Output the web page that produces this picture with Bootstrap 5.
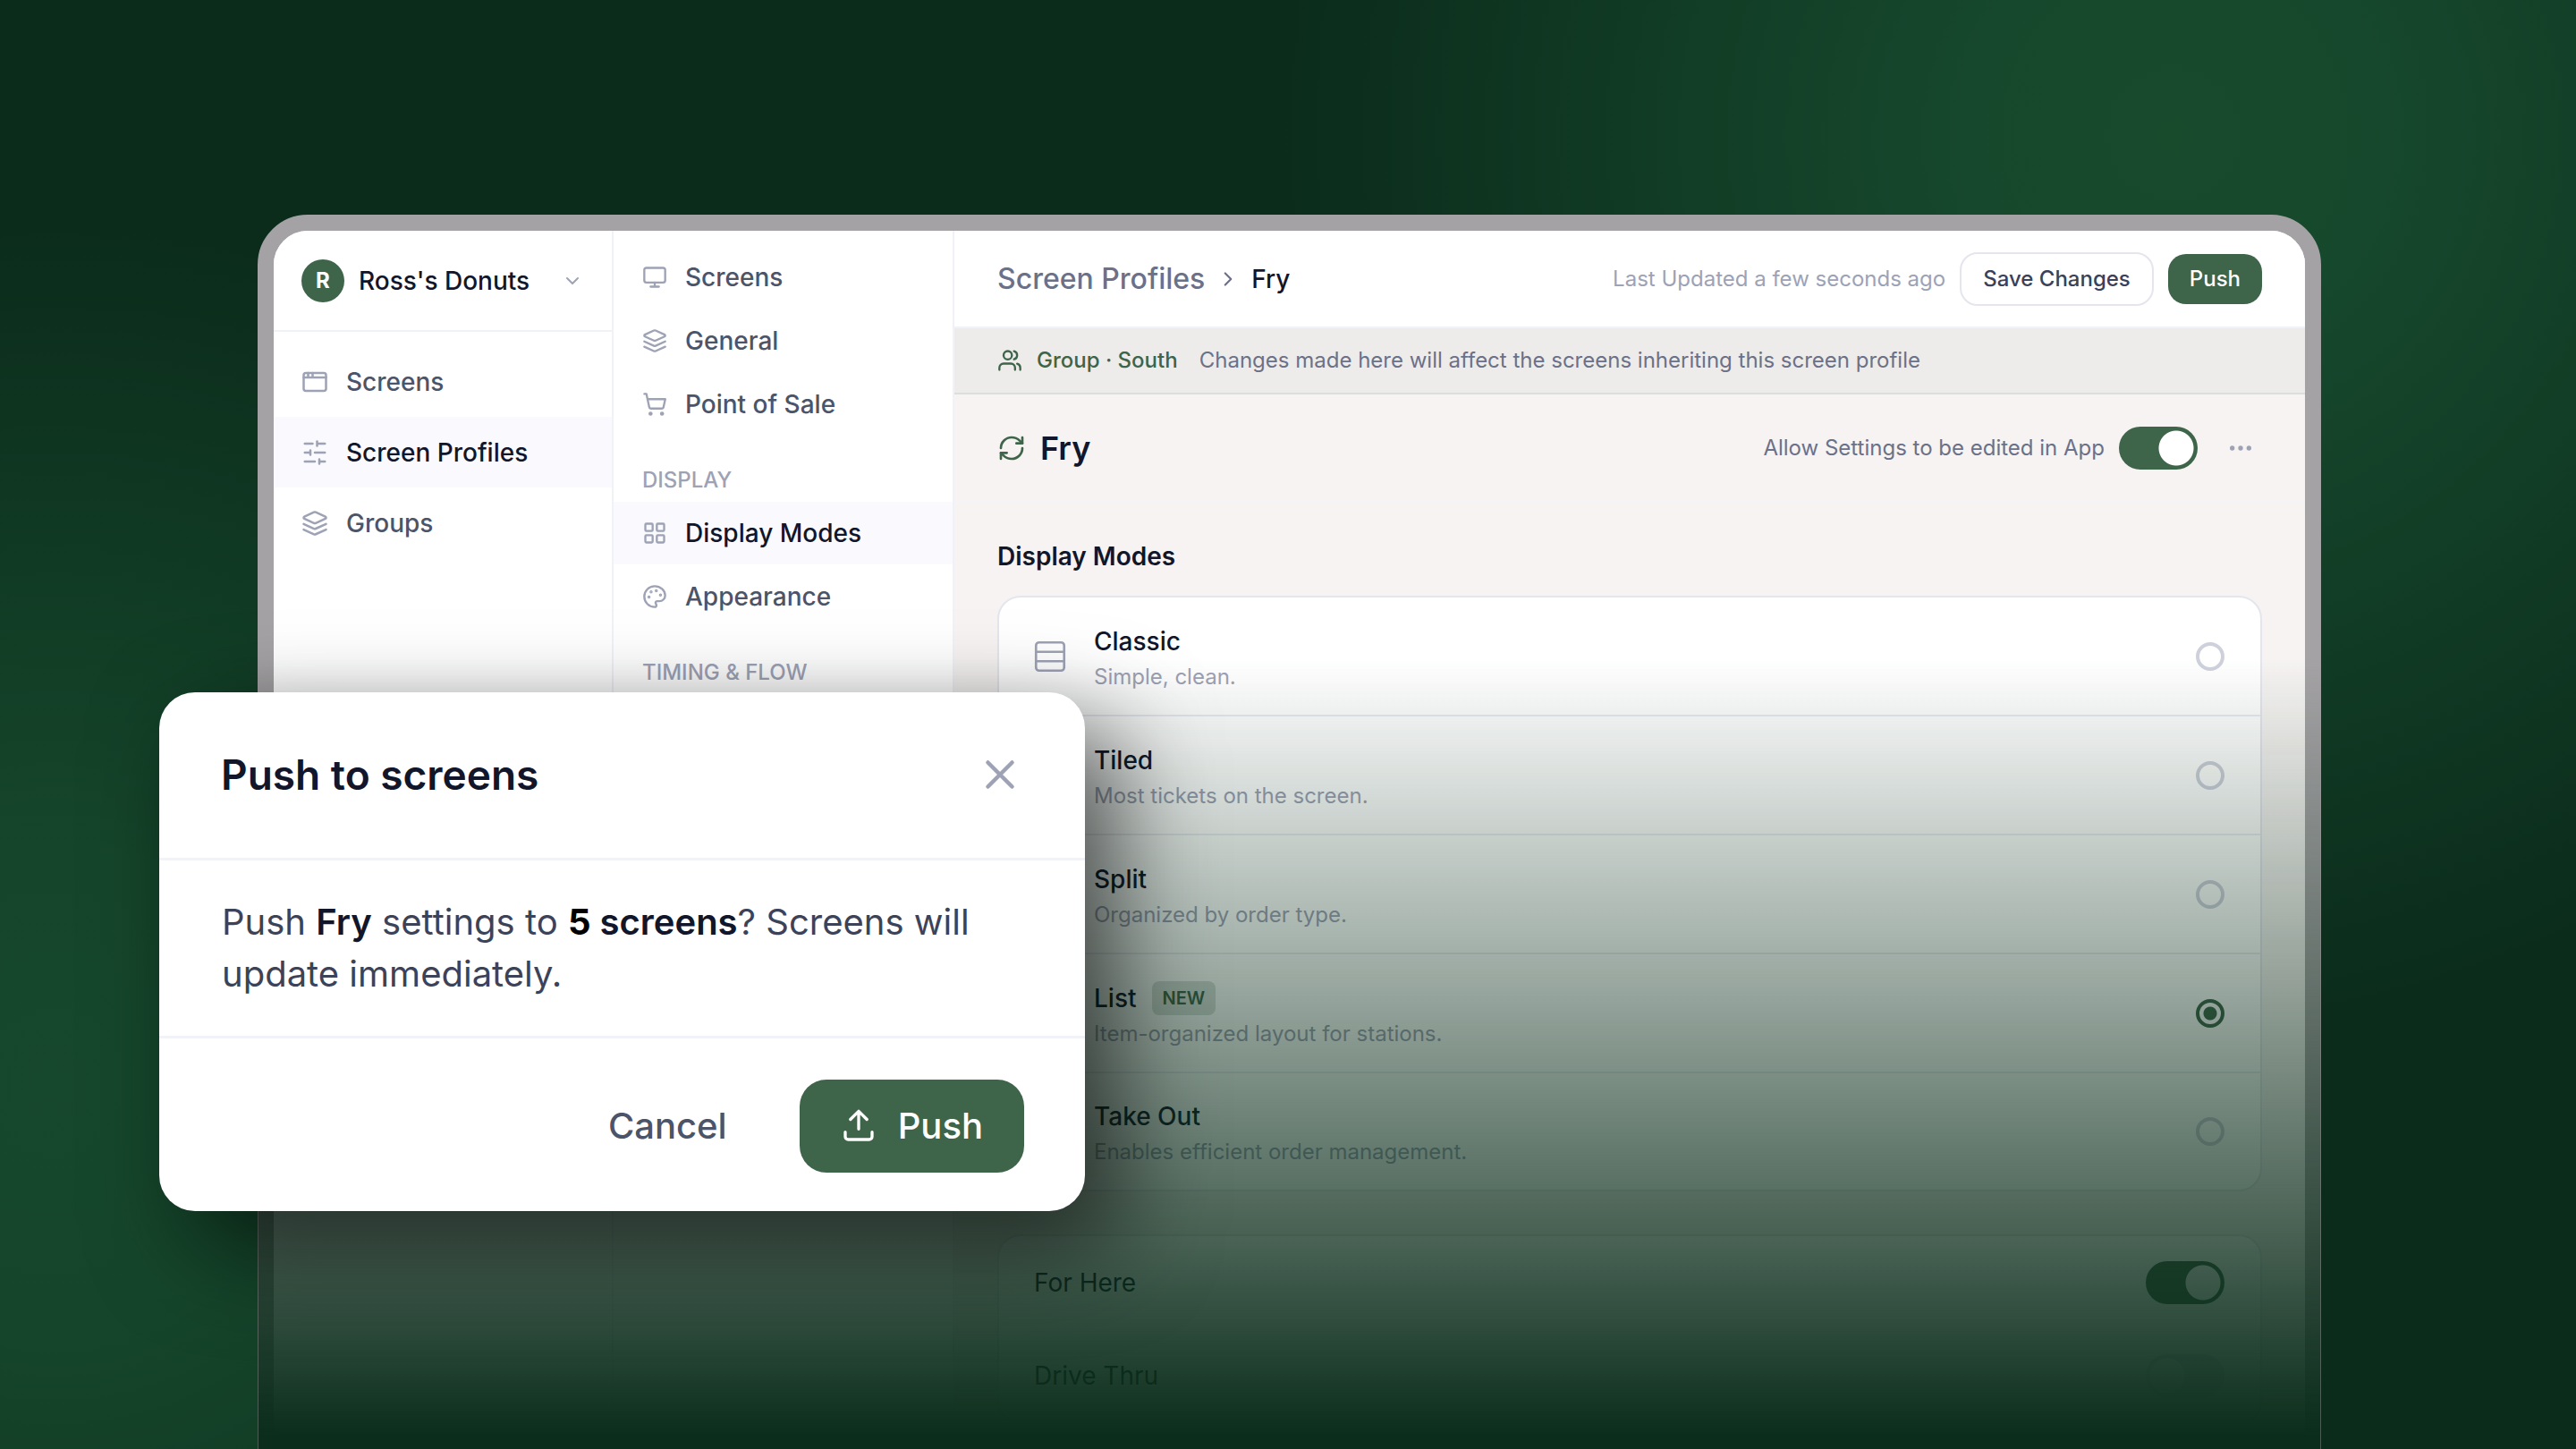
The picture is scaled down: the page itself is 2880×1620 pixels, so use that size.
<!DOCTYPE html>
<html lang="en">
<head>
<meta charset="utf-8">
<meta name="viewport" content="width=device-width, initial-scale=1">
<title>Screen Profiles - Fry</title>
<link href="https://cdn.jsdelivr.net/npm/bootstrap@5.3.0/dist/css/bootstrap.min.css" rel="stylesheet">
<style>
  :root {
    --ink: #11162b;
    --ink-soft: #4b5468;
    --muted: #6b7188;
    --faint: #9da2b5;
    --brand: #3e6449;
    --line: #f1f1f8;
    --card-line: #e5e5ed;
    --tint: #f9f9fe;
  }
  body { font-family: Inter, "Liberation Sans", sans-serif; font-size: 28px; line-height: 40px; color: var(--ink); overflow: hidden; }
  svg { display: block; flex: none; fill: none; stroke: currentColor; stroke-width: 2; stroke-linecap: round; stroke-linejoin: round; }
  .stage {
    height: 100vh;
    padding: 240px 285px 0 288px;
    background:
      radial-gradient(circle at 2430px 150px, #184a2c 0, #16482d 240px, rgba(22,72,45,0) 1000px),
      radial-gradient(circle at 60px 1210px, #16482d 0, #15462b 260px, rgba(21,70,43,0) 960px),
      #0b2c1b;
  }
  .device { height: 1500px; border: 18px solid #a5a2a5; border-radius: 56px; background: #fff; }
  .device-inner { height: 100%; border-radius: 38px; overflow: hidden; }
  .fade-out { top: 478px; left: -18px; right: -18px; bottom: -18px; pointer-events: none;
    border-inline: 1px solid rgba(165,162,165,.4);
    background: linear-gradient(rgba(20,35,30,0) 0, rgba(11,45,27,.25) 218px, #0b2d1b 870px); }

  .side { flex: 0 0 380px; border-right: 2px solid var(--line); background: #fff; }
  .account { height: 113px; padding: 0 32px 0 31px; border-bottom: 2px solid var(--line); font-weight: 500; gap: 16px; }
  .account svg, .updated, .side-title { color: var(--faint); }
  .avatar { width: 48px; height: 48px; background: var(--brand); color: #fff; font-size: 24px; font-weight: 700; }
  .side-link { display: flex; align-items: center; gap: 20px; font-weight: 500; color: var(--ink-soft); text-decoration: none; }
  .side-link svg { color: var(--faint); }
  .side-link.active { background: var(--tint); color: var(--ink); }
  .side-a .side-link { height: 79px; padding: 0 31px; }
  .side-b { flex-basis: 381px; padding-top: 17px; }
  .side-b .side-link { height: 70px; margin-bottom: 1px; padding: 0 32px; }
  .side-title { padding: 33px 32px 8px; font-size: 24px; line-height: 32px; font-weight: 500; margin: 0; }

  .work { background: #f6f3f2; min-width: 0; }
  .work-top { height: 109px; padding: 0 48px; background: #fff; border-bottom: 2px solid var(--line); }
  .crumb { font-size: 32px; color: var(--muted); text-decoration: none; font-weight: 500; }
  .crumb-sep { margin: 0 13px; color: var(--muted); }
  .crumb-here { font-weight: 500; }
  .t24 { font-size: 24px; line-height: 34px; }
  .btn-app { font-size: 24px; line-height: 32px; font-weight: 500; padding: 12px 24px; border-radius: 20px; border: 0; }
  .btn-save { color: #3a4158; background: #fff; border: 2px solid var(--card-line); }
  .btn-brand, .btn-brand:hover { background: var(--brand); color: #fff; }
  .group-bar { height: 74px; padding: 0 48px; background: #edecea; border-bottom: 2px solid #dadfdb; color: var(--muted); }
  .group-name { color: var(--brand); font-weight: 500; margin-right: 24px; }
  .brand-icon { color: var(--brand); }
  .title-bar { height: 121px; padding: 0 48px; border-bottom: 2px solid #f3f3f8; }
  .title-bar h1 { font-size: 36px; line-height: 44px; font-weight: 600; }
  .title-bar label { color: var(--muted); }
  .form-check-input.toggle {
    width: 88px; height: 48px; margin: 0; border: 0; border-radius: 24px; background-color: var(--card-line);
    background-image: radial-gradient(circle at 24px 24px, #fff 19px, rgba(255,255,255,0) 20px); background-position: 0 0; background-size: 88px 48px; }
  .form-check-input.toggle:checked {
    background-color: var(--brand);
    background-image: radial-gradient(circle at 64px 24px, #fff 19px, rgba(255,255,255,0) 20px); }
  .dots { color: var(--faint); border: 0; background: none; }
  .modes { padding: 40px 48px 0; }
  .modes h2 { font-size: 28px; line-height: 40px; font-weight: 600; margin: 0 0 24px; }
  .panel { background: #fff; border: 2px solid var(--card-line); border-radius: 26px; margin-bottom: 48px; }
  .mode { height: 133px; padding: 0 40px 0 36px; gap: 28px; border-bottom: 2px solid #ebebf2; cursor: pointer; }
  .mode:last-child { height: 130px; border-bottom: 0; }
  .mode svg { color: var(--faint); stroke-width: 1.5; }
  .mode-name { line-height: 46px; font-weight: 500; gap: 17px; }
  .mode-note { font-size: 24px; line-height: 34px; color: var(--faint); }
  .pill-new { font-size: 20px; line-height: 26px; font-weight: 600; color: var(--brand); background: #d9dfdb; padding: 6px 12px; border-radius: 8px; }
  .mode .form-check-input { width: 32px; height: 32px; margin: 0; border: 4px solid #ced1dc; background-color: transparent; }
  .mode .form-check-input:checked { border-color: var(--brand); background-image: radial-gradient(circle, var(--brand) 7px, rgba(62,100,73,0) 8px); }
  .switch-row { height: 104px; padding: 0 40px 0 39px; color: var(--ink); }

  .push-dialog { left: 178px; top: 774px; width: 1035px; background: #fff; border-radius: 40px; box-shadow: 36px 38px 110px rgba(0,0,0,.6); }
  .push-head { padding: 64px 68px 65px 69px; border-bottom: 3px solid #f2f2f9; }
  .push-head h2 { font-size: 46px; line-height: 56px; font-weight: 600; }
  .push-close { color: var(--faint); border: 0; background: none; padding: 0; }
  .push-text { padding: 40px 68px 40px 70px; font-size: 40px; line-height: 58px; color: #3c4359; border-bottom: 3px solid #f2f2f9; }
  .push-text strong { color: var(--ink); font-weight: 600; }
  .push-text .count { color: #000; font-weight: 700; }
  .push-foot { padding: 46px 68px 43px; gap: 35px; }
  .btn-dialog { font-size: 40px; line-height: 56px; font-weight: 500; padding: 24px 46px; border-radius: 30px; border: 0; }
  .btn-dialog.btn-plain { color: var(--ink-soft); background: none; }
</style>
</head>
<body>
<div class="stage position-relative overflow-hidden">
  <div class="device position-relative">
    <div class="device-inner d-flex">

      <nav class="side side-a" aria-label="Main">
        <div class="account d-flex align-items-center mb-3">
          <span class="avatar rounded-circle d-flex align-items-center justify-content-center">R</span>
          <span class="flex-grow-1">Ross's Donuts</span>
          <svg width="24" height="24" viewBox="0 0 24 24"><path d="m6 9 6 6 6-6"/></svg>
        </div>
        <a class="side-link" href="#"><svg width="30" height="30" viewBox="0 0 24 24"><rect x="2" y="4" width="20" height="16" rx="2"/><path d="M10 4v4M2 8h20M6 4v4"/></svg>Screens</a>
        <a class="side-link active" href="#"><svg width="30" height="30" viewBox="0 0 24 24"><path d="M21 4h-7M10 4H3M21 12h-9M8 12H3M21 20h-5M12 20H3M14 2v4M8 10v4M16 18v4"/></svg>Screen Profiles</a>
        <a class="side-link" href="#"><svg width="30" height="30" viewBox="0 0 24 24"><path d="m12.83 2.18a2 2 0 0 0-1.66 0L2.6 6.08a1 1 0 0 0 0 1.83l8.58 3.91a2 2 0 0 0 1.66 0l8.58-3.9a1 1 0 0 0 0-1.83Z"/><path d="m22 17.65-9.17 4.16a2 2 0 0 1-1.66 0L2 17.65"/><path d="m22 12.65-9.17 4.16a2 2 0 0 1-1.66 0L2 12.65"/></svg>Groups</a>
      </nav>

      <nav class="side side-b" aria-label="Profile settings">
        <a class="side-link" href="#"><svg width="28" height="28" viewBox="0 0 24 24"><rect x="2" y="3" width="20" height="14" rx="2"/><path d="M8 21h8M12 17v4"/></svg>Screens</a>
        <a class="side-link" href="#"><svg width="28" height="28" viewBox="0 0 24 24"><path d="m12.83 2.18a2 2 0 0 0-1.66 0L2.6 6.08a1 1 0 0 0 0 1.83l8.58 3.91a2 2 0 0 0 1.66 0l8.58-3.9a1 1 0 0 0 0-1.83Z"/><path d="m22 17.65-9.17 4.16a2 2 0 0 1-1.66 0L2 17.65"/><path d="m22 12.65-9.17 4.16a2 2 0 0 1-1.66 0L2 12.65"/></svg>General</a>
        <a class="side-link" href="#"><svg width="28" height="28" viewBox="0 0 24 24"><circle cx="8" cy="21" r="1"/><circle cx="19" cy="21" r="1"/><path d="M2.05 2.05h2l2.66 12.42a2 2 0 0 0 2 1.58h9.78a2 2 0 0 0 1.95-1.57l1.65-7.43H5.12"/></svg>Point of Sale</a>
        <h2 class="side-title">DISPLAY</h2>
        <a class="side-link active" href="#"><svg width="28" height="28" viewBox="0 0 24 24"><rect x="3" y="3" width="7" height="7" rx="1"/><rect x="14" y="3" width="7" height="7" rx="1"/><rect x="14" y="14" width="7" height="7" rx="1"/><rect x="3" y="14" width="7" height="7" rx="1"/></svg>Display Modes</a>
        <a class="side-link" href="#"><svg width="28" height="28" viewBox="0 0 24 24"><g fill="currentColor"><circle cx="13.5" cy="6.5" r=".5"/><circle cx="17.5" cy="10.5" r=".5"/><circle cx="8.5" cy="7.5" r=".5"/><circle cx="6.5" cy="12.5" r=".5"/></g><path d="M12 2C6.5 2 2 6.5 2 12s4.500 10 10 10c.926 0 1.648-.746 1.648-1.688 0-.437-.18-.835-.437-1.125-.29-.289-.438-.652-.438-1.125a1.640 1.640 0 0 1 1.668-1.668h1.996c3.051 0 5.555-2.503 5.555-5.554C21.965 6.012 17.461 2 12 2z"/></svg>Appearance</a>
        <h2 class="side-title">TIMING &amp; FLOW</h2>
      </nav>

      <main class="work flex-grow-1">
        <header class="work-top d-flex align-items-center">
          <a class="crumb" href="#">Screen Profiles</a>
          <svg class="crumb-sep" width="26" height="26" viewBox="0 0 24 24"><path d="m9 18 6-6-6-6"/></svg>
          <span class="crumb-here">Fry</span>
          <span class="updated t24 ms-auto">Last Updated a few seconds ago</span>
          <button class="btn btn-app btn-save ms-3" type="button">Save Changes</button>
          <button class="btn btn-app btn-brand ms-3" type="button">Push</button>
        </header>

        <div class="group-bar t24 d-flex align-items-center">
          <svg class="brand-icon me-3" width="28" height="28" viewBox="0 0 24 24"><path d="M17 21v-2a4 4 0 0 0-4-4H6a4 4 0 0 0-4 4v2"/><circle cx="10" cy="7" r="4"/><path d="M22 21v-2a4 4 0 0 0-3-3.870M16 3.130a4 4 0 0 1 0 7.750"/></svg>
          <span class="group-name">Group · South</span>
          <span>Changes made here will affect the screens inheriting this screen profile</span>
        </div>

        <div class="title-bar d-flex align-items-center">
          <svg class="brand-icon me-3" width="32" height="32" viewBox="0 0 24 24"><path d="M3 12a9 9 0 0 1 9-9 9.750 9.750 0 0 1 6.740 2.740L21 8"/><path d="M21 3v5h-5"/><path d="M21 12a9 9 0 0 1-9 9 9.750 9.750 0 0 1-6.740-2.740L3 16"/><path d="M8 16H3v5"/></svg>
          <h1 class="mb-0">Fry</h1>
          <label class="t24 ms-auto me-3" for="allowEdit">Allow Settings to be edited in App</label>
          <input class="form-check-input toggle" type="checkbox" role="switch" id="allowEdit" checked>
          <button class="dots ms-4 p-2" type="button" aria-label="More"><svg width="32" height="32" viewBox="0 0 24 24"><g fill="currentColor"><circle cx="5" cy="12" r="1"/><circle cx="12" cy="12" r="1"/><circle cx="19" cy="12" r="1"/></g></svg></button>
        </div>

        <section class="modes">
          <h2>Display Modes</h2>
          <div class="panel">
            <label class="mode d-flex align-items-center" for="mClassic">
              <svg width="42" height="42" viewBox="0 0 24 24"><rect x="3" y="3" width="18" height="18" rx="2"/><path d="M21 9H3M21 15H3"/></svg>
              <span class="flex-grow-1"><span class="mode-name d-flex align-items-center">Classic</span><span class="mode-note d-block">Simple, clean.</span></span>
              <input class="form-check-input" type="radio" name="mode" id="mClassic">
            </label>
            <label class="mode d-flex align-items-center" for="mTiled">
              <svg width="42" height="42" viewBox="0 0 24 24"><rect x="3" y="3" width="18" height="18" rx="2"/><path d="M12 3v18M3 12h18"/></svg>
              <span class="flex-grow-1"><span class="mode-name d-flex align-items-center">Tiled</span><span class="mode-note d-block">Most tickets on the screen.</span></span>
              <input class="form-check-input" type="radio" name="mode" id="mTiled">
            </label>
            <label class="mode d-flex align-items-center" for="mSplit">
              <svg width="42" height="42" viewBox="0 0 24 24"><rect x="3" y="3" width="18" height="18" rx="2"/><path d="M12 3v18"/></svg>
              <span class="flex-grow-1"><span class="mode-name d-flex align-items-center">Split</span><span class="mode-note d-block">Organized by order type.</span></span>
              <input class="form-check-input" type="radio" name="mode" id="mSplit">
            </label>
            <label class="mode d-flex align-items-center" for="mList">
              <svg width="42" height="42" viewBox="0 0 24 24"><path d="M8 6h13M8 12h13M8 18h13M3 6h.01M3 12h.01M3 18h.01"/></svg>
              <span class="flex-grow-1"><span class="mode-name d-flex align-items-center">List <span class="pill-new">NEW</span></span><span class="mode-note d-block">Item-organized layout for stations.</span></span>
              <input class="form-check-input" type="radio" name="mode" id="mList" checked>
            </label>
            <label class="mode d-flex align-items-center" for="mTake">
              <svg width="42" height="42" viewBox="0 0 24 24"><path d="M6 2 3 6v14a2 2 0 0 0 2 2h14a2 2 0 0 0 2-2V6l-3-4ZM3 6h18M16 10a4 4 0 0 1-8 0"/></svg>
              <span class="flex-grow-1"><span class="mode-name d-flex align-items-center">Take Out</span><span class="mode-note d-block">Enables efficient order management.</span></span>
              <input class="form-check-input" type="radio" name="mode" id="mTake">
            </label>
          </div>

          <div class="panel">
            <div class="switch-row d-flex align-items-center justify-content-between">
              <label for="forHere">For Here</label>
              <input class="form-check-input toggle" type="checkbox" role="switch" id="forHere" checked>
            </div>
            <div class="switch-row d-flex align-items-center justify-content-between">
              <label for="driveThru">Drive Thru</label>
              <input class="form-check-input toggle" type="checkbox" role="switch" id="driveThru">
            </div>
          </div>
        </section>
      </main>
    </div>
    <div class="fade-out position-absolute"></div>
  </div>

  <div class="push-dialog position-absolute" role="dialog" aria-labelledby="pushTitle">
    <div class="push-head d-flex align-items-center justify-content-between">
      <h2 class="mb-0" id="pushTitle">Push to screens</h2>
      <button class="push-close" type="button" aria-label="Close"><svg width="54" height="54" viewBox="0 0 24 24"><path d="M18 6 6 18M6 6l12 12"/></svg></button>
    </div>
    <p class="push-text mb-0">Push <strong>Fry</strong> settings to <strong><span class="count">5</span> screens</strong>? Screens will update immediately.</p>
    <div class="push-foot d-flex justify-content-end">
      <button class="btn btn-dialog btn-plain" type="button">Cancel</button>
      <button class="btn btn-dialog btn-brand d-flex align-items-center gap-4" type="button"><svg width="40" height="40" viewBox="0 0 24 24"><path d="M21 16v3a2 2 0 0 1-2 2H5a2 2 0 0 1-2-2v-3M17.500 7.500 12 2 6.500 7.500M12 2v12"/></svg>Push</button>
    </div>
  </div>
</div>
<script src="https://cdn.jsdelivr.net/npm/bootstrap@5.3.0/dist/js/bootstrap.bundle.min.js"></script>
</body>
</html>
